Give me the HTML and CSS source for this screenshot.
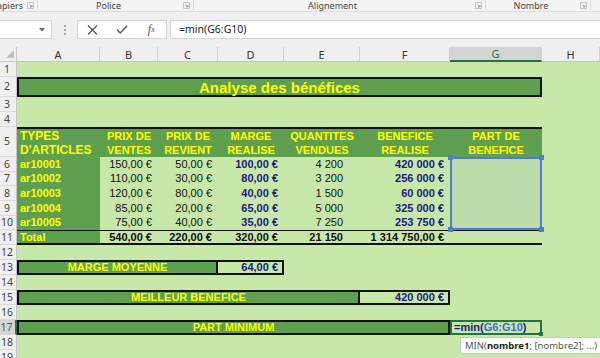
FILE: index.html
```html
<!doctype html>
<html lang="fr">

<head>
    <meta charset="utf-8">
    <title>Analyse des bénéfices</title>
    <link rel="stylesheet" href="styles.css">
</head>

<body>

    <div class="ribbon">
        <div class="group g1"><div class="group-label">Presse-papiers</div><div class="launcher"><svg width="7" height="7" viewBox="0 0 7 7"><path d="M0.5 0.5H6.5V6.5H0.5Z" fill="none" stroke="#c4c4c4"/><path d="M2.5 2.5L5 5M5 3V5H3" fill="none" stroke="#9a9a9a"/></svg></div></div>
        <div class="group g2"><div class="group-label">Police</div><div class="launcher"><svg width="7" height="7" viewBox="0 0 7 7"><path d="M0.5 0.5H6.5V6.5H0.5Z" fill="none" stroke="#c4c4c4"/><path d="M2.5 2.5L5 5M5 3V5H3" fill="none" stroke="#9a9a9a"/></svg></div></div>
        <div class="group g3"><div class="group-label">Alignement</div><div class="launcher"><svg width="7" height="7" viewBox="0 0 7 7"><path d="M0.5 0.5H6.5V6.5H0.5Z" fill="none" stroke="#c4c4c4"/><path d="M2.5 2.5L5 5M5 3V5H3" fill="none" stroke="#9a9a9a"/></svg></div></div>
        <div class="group g4"><div class="group-label">Nombre</div><div class="launcher"><svg width="7" height="7" viewBox="0 0 7 7"><path d="M0.5 0.5H6.5V6.5H0.5Z" fill="none" stroke="#c4c4c4"/><path d="M2.5 2.5L5 5M5 3V5H3" fill="none" stroke="#9a9a9a"/></svg></div></div>
    </div>

    <div class="fbar">
        <div class="namebox"><svg width="6" height="4" viewBox="0 0 6 4"><path d="M0 0H6L3 3.5Z" fill="#666"/></svg></div>
        <div class="dots"><span></span><span></span><span></span></div>
        <div class="fx-box">
            <div class="fx-btn"><svg width="11" height="10" viewBox="0 0 11 10"><path d="M1 0.5L10 9.5M10 0.5L1 9.5" stroke="#555" stroke-width="1.3" fill="none"/></svg></div>
            <div class="fx-btn"><svg width="12" height="9" viewBox="0 0 12 9"><path d="M0.8 4.6L4.2 8L11.2 0.8" stroke="#555" stroke-width="1.4" fill="none"/></svg></div>
            <div class="fx-btn fx">f<sub>x</sub></div>
        </div>
        <div class="formula">=min(G6:G10)</div>
    </div>

    <div class="sheet">
        <div class="corner"><svg width="10" height="10" viewBox="0 0 10 10"><path d="M9 1V9H1Z" fill="#bdbdbd"/></svg></div>
        <div class="colhead">A</div>
        <div class="colhead">B</div>
        <div class="colhead">C</div>
        <div class="colhead">D</div>
        <div class="colhead">E</div>
        <div class="colhead">F</div>
        <div class="colhead active">G</div>
        <div class="colhead">H</div>

        <div class="rowhead">1</div><div class="span8"></div>

        <div class="rowhead">2</div><div class="title span7">Analyse des bénéfices</div><div></div>

        <div class="rowhead">3</div><div class="span8"></div>
        <div class="rowhead">4</div><div class="span8"></div>

        <div class="rowhead">5</div>
        <div class="th first">TYPES<br>D'ARTICLES</div>
        <div class="th">PRIX DE<br>VENTES</div>
        <div class="th">PRIX DE<br>REVIENT</div>
        <div class="th">MARGE<br>REALISE</div>
        <div class="th">QUANTITES<br>VENDUES</div>
        <div class="th">BENEFICE<br>REALISE</div>
        <div class="th">PART DE<br>BENEFICE</div>
        <div></div>

        <div class="rowhead">6</div>
        <div class="code">ar10001</div>
        <div class="num">150,00 €</div>
        <div class="num">50,00 €</div>
        <div class="num strong">100,00 €</div>
        <div class="num qty">4 200</div>
        <div class="num strong">420 000 €</div>
        <div class="range"><i class="hd tl"></i><i class="hd tr"></i><i class="hd bl"></i><i class="hd br"></i></div>
        <div></div>

        <div class="rowhead">7</div>
        <div class="code">ar10002</div>
        <div class="num">110,00 €</div>
        <div class="num">30,00 €</div>
        <div class="num strong">80,00 €</div>
        <div class="num qty">3 200</div>
        <div class="num strong">256 000 €</div>
        <div></div>

        <div class="rowhead">8</div>
        <div class="code">ar10003</div>
        <div class="num">120,00 €</div>
        <div class="num">80,00 €</div>
        <div class="num strong">40,00 €</div>
        <div class="num qty">1 500</div>
        <div class="num strong">60 000 €</div>
        <div></div>

        <div class="rowhead">9</div>
        <div class="code">ar10004</div>
        <div class="num">85,00 €</div>
        <div class="num">20,00 €</div>
        <div class="num strong">65,00 €</div>
        <div class="num qty">5 000</div>
        <div class="num strong">325 000 €</div>
        <div></div>

        <div class="rowhead">10</div>
        <div class="code">ar10005</div>
        <div class="num">75,00 €</div>
        <div class="num">40,00 €</div>
        <div class="num strong">35,00 €</div>
        <div class="num qty">7 250</div>
        <div class="num strong">253 750 €</div>
        <div></div>

        <div class="rowhead">11</div>
        <div class="code tot">Total</div>
        <div class="num tot">540,00 €</div>
        <div class="num tot">220,00 €</div>
        <div class="num tot">320,00 €</div>
        <div class="num qty tot">21 150</div>
        <div class="num tot">1 314 750,00 €</div>
        <div class="tot"></div>
        <div></div>

        <div class="rowhead">12</div><div class="span8"></div>

        <div class="rowhead">13</div>
        <div class="label span3">MARGE MOYENNE</div>
        <div class="val">64,00 €</div>
        <div class="span4"></div>

        <div class="rowhead">14</div><div class="span8"></div>

        <div class="rowhead">15</div>
        <div class="label span5">MEILLEUR BENEFICE</div>
        <div class="val">420 000 €</div>
        <div class="span2"></div>

        <div class="rowhead">16</div><div class="span8"></div>

        <div class="rowhead active">17</div>
        <div class="label span6">PART MINIMUM</div>
        <div class="edit">=min(<span class="ref">G6:G10</span>)<i class="edit-hd"></i>
            <div class="tip">MIN(<b>nombre1</b>; [nombre2]; ...)</div>
        </div>
        <div></div>

        <div class="rowhead">18</div><div class="span8"></div>
        <div class="rowhead">19</div><div class="span8"></div>
    </div>

</body>

</html>
```

FILE: styles.css
```css
*{
    box-sizing: border-box;
}
body{
    margin: 0;
    width: 600px;
    height: 358px;
    overflow: hidden;
    background: #f0f0f0;
    font-family: "Liberation Sans", Arial, sans-serif;
}

/* ribbon bottom */
.ribbon{
    display: flex;
    height: 12px;
    background: #f5f5f5;
    border-bottom: 1px solid #dcdcdc;
    font-family: "Noto Sans", sans-serif;
    font-size: 9px;
    color: #444;
}
.group{
    display: flex;
    align-items: center;
    height: 10px;
    border-right: 1px solid #d8d8d8;
}
.g1{ width: 38px; }
.g2{ width: 156px; }
.g3{ width: 292px; }
.g4{ width: 105px; }
.group-label{
    flex: 1;
    display: flex;
    justify-content: center;
    overflow: hidden;
    white-space: nowrap;
    line-height: 11px;
}
.g1 .group-label{
    justify-content: flex-end;
}
.launcher{
    width: 14px;
    display: flex;
    justify-content: center;
}

/* formula bar */
.fbar{
    display: flex;
    align-items: center;
    height: 35px;
    padding: 8px 0;
}
.namebox{
    width: 52px;
    height: 19px;
    background: #fff;
    border: 1px solid #d6d6d6;
    border-left: 0;
    display: flex;
    align-items: center;
    justify-content: flex-end;
    padding-right: 6px;
}
.dots{
    width: 25px;
    display: flex;
    flex-direction: column;
    align-items: center;
    gap: 2px;
}
.dots span{
    width: 2px;
    height: 2px;
    background: #a8a8a8;
}
.fx-box{
    width: 90px;
    height: 19px;
    background: #fff;
    border: 1px solid #d6d6d6;
    display: flex;
}
.fx-btn{
    width: 30px;
    display: flex;
    align-items: center;
    justify-content: center;
}
.fx{
    font-family: "Liberation Serif", serif;
    font-style: italic;
    font-size: 12px;
    color: #555;
}
.fx sub{
    font-size: 8px;
    vertical-align: -1px;
}
.formula{
    flex: 1;
    height: 19px;
    margin-left: 3px;
    background: #fff;
    border: 1px solid #d6d6d6;
    border-right: 0;
    padding-left: 8px;
    font-family: "Noto Sans", sans-serif;
    font-size: 10.5px;
    line-height: 17px;
    color: #222;
}

/* sheet */
.sheet{
    display: grid;
    grid-template-columns: 17px 83px 58px 60px 66px 76px 90px 92px 58px;
    grid-template-rows: 15px 15px 20px 15px 15px 30px repeat(6, 14.67px) repeat(8, 15px);
    background: #c8e8a9;
    font-size: 11px;
    line-height: 1;
}
.sheet > div{
    display: flex;
    align-items: center;
    white-space: nowrap;
}
.corner{
    background: #f0f0f0;
    border-right: 1px solid #c8c8c8;
    border-bottom: 1px solid #c8c8c8;
    justify-content: flex-end;
    align-items: flex-end !important;
    padding: 0 1px 2px 0;
}
.colhead{
    justify-content: center;
    background: #f0f0f0;
    border-right: 1px solid #d0d0d0;
    border-bottom: 1px solid #c4c4c4;
    font-family: "Noto Sans", sans-serif;
    font-size: 11px;
    color: #333;
}
.colhead.active{
    background: #d4d4d4;
    color: #217346;
    border-bottom: 2px solid #217346;
}
.rowhead{
    justify-content: center;
    padding-right: 2px;
    background: #f0f0f0;
    border-right: 1px solid #c4c4c4;
    border-bottom: 1px solid #dadada;
    font-family: "Noto Sans", sans-serif;
    font-size: 10.5px;
    color: #444;
}
.rowhead.active{
    background: #d4d4d4;
    color: #217346;
    border-right: 2px solid #217346;
}

.span2{ grid-column: span 2; }
.span3{ grid-column: span 3; }
.span4{ grid-column: span 4; }
.span5{ grid-column: span 5; }
.span6{ grid-column: span 6; }
.span7{ grid-column: span 7; }
.span8{ grid-column: span 8; }

.title{
    justify-content: center;
    background: #5f9f50;
    border: 2px solid #111;
    color: #ffff00;
    font-weight: bold;
    font-size: 15px;
}

.th{
    display: block !important;
    background: #5f9f50;
    border-top: 2px solid #111;
    color: #ffff00;
    font-weight: bold;
    text-align: center;
    line-height: 14px;
}
.th.first{
    text-align: left;
    padding-left: 3px;
    font-size: 12px;
}

.code{
    background: #5f9f50;
    color: #ffff00;
    font-weight: bold;
    padding-left: 3px;
}
.num{
    justify-content: flex-end;
    padding-right: 6px;
    color: #111;
}
.qty{
    padding-right: 17px;
}
.strong{
    font-weight: bold;
    color: #1a1a80;
}
.tot{
    border-top: 1px solid #111;
    border-bottom: 2px solid #111;
    font-weight: bold;
}

.range{
    grid-row: span 5;
    position: relative;
    background: #bcdbab;
    border: 2px solid #4a7cd8;
}
.hd{
    position: absolute;
    width: 5px;
    height: 5px;
    background: #4a7cd8;
}
.tl{ top: -4px; left: -4px; }
.tr{ top: -4px; right: -4px; }
.bl{ bottom: -4px; left: -4px; }
.br{ bottom: -4px; right: -4px; }

.label{
    justify-content: center;
    background: #5f9f50;
    border: 2px solid #111;
    color: #ffff00;
    font-weight: bold;
}
.val{
    justify-content: flex-end;
    padding-right: 4px;
    border: 2px solid #111;
    border-left: 0;
    color: #1a1a80;
    font-weight: bold;
}

.edit{
    position: relative;
    padding-left: 2px;
    border: 2px solid #217346;
    color: #1a1a80;
    font-weight: bold;
    overflow: visible;
}
.ref{
    color: #3a6fd6;
}
.edit-hd{
    position: absolute;
    right: -3px;
    bottom: -3px;
    width: 4px;
    height: 4px;
    background: #217346;
}
.tip{
    position: absolute;
    top: 15px;
    left: 8px;
    height: 17px;
    padding: 0 6px 0 4px;
    background: #fff;
    border: 1px solid #c8c8c8;
    font-family: "Noto Sans", sans-serif;
    font-weight: normal;
    font-size: 9.5px;
    line-height: 15px;
    color: #555;
    white-space: nowrap;
}
.tip b{
    color: #222;
}
```
